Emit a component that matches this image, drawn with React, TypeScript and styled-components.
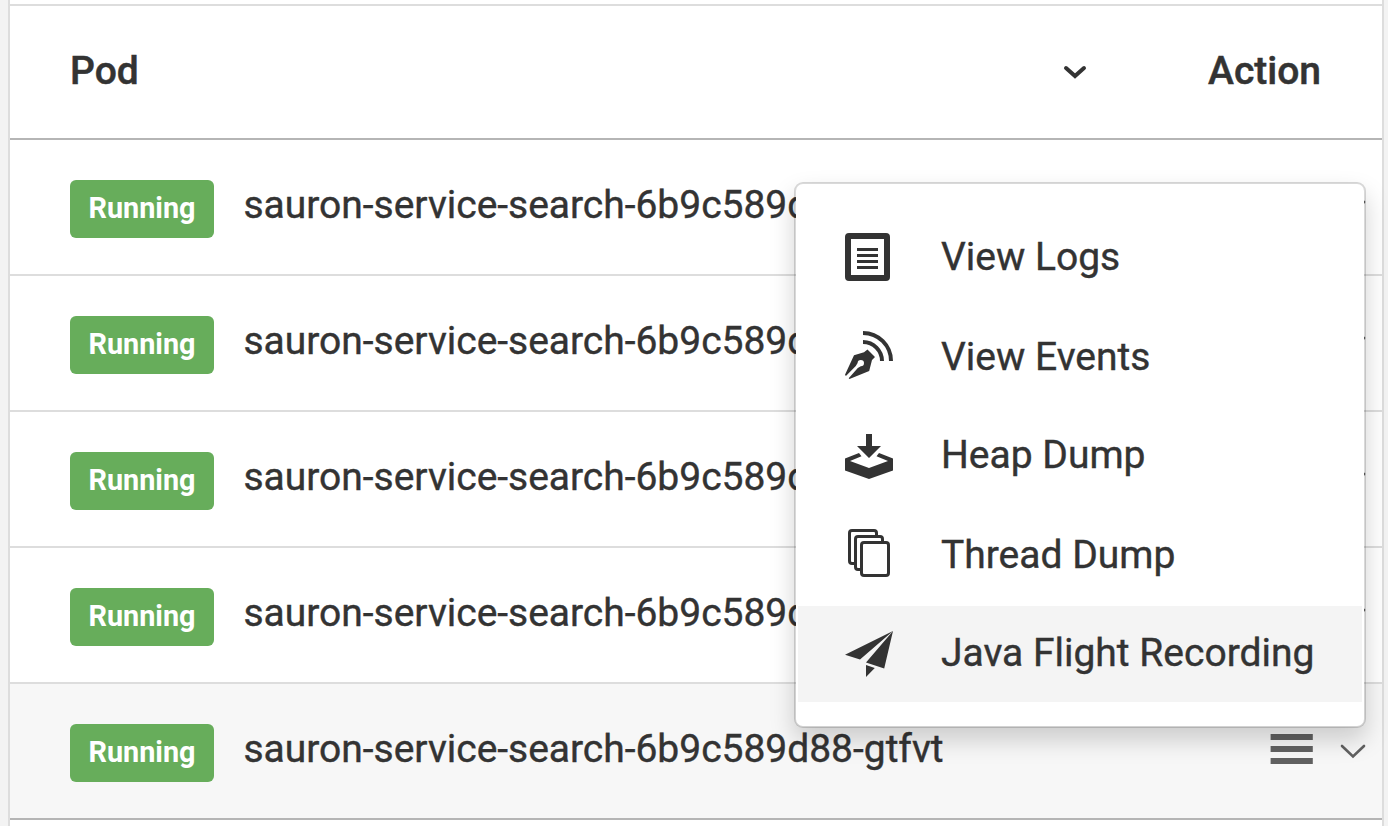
import React from "react";
import styled, { createGlobalStyle } from "styled-components";

const GlobalStyle = createGlobalStyle`
  *, *::before, *::after { box-sizing: border-box; }
  html, body { margin: 0; background: #f3f3f3; }
  body { overflow: hidden; font-family: Roboto, "Liberation Sans", sans-serif; color: #333; }
`;

const Page = styled.div`
  height: 826px;
  padding: 0 4px 0 8px;
  overflow: hidden;
`;

const Panel = styled.main`
  position: relative;
  width: 1376px;
  height: 826px;
  padding-top: 4px;
  border: solid #ddd;
  border-width: 0 2px;
  background: #fff;
`;

const HeaderRow = styled.div`
  display: flex;
  align-items: center;
  height: 136px;
  padding: 0 61px 2px 60px;
  border-top: 2px solid #ddd;
  border-bottom: 2px solid #b5b5b5;
`;

const HeaderLabel = styled.span`
  font-size: 39px;
  font-weight: 500;
  line-height: 46px;
  -webkit-text-stroke: 0.5px #333;
`;

const SortIcon = styled.svg`
  display: block;
  width: 24px;
  height: 16px;
  margin: 1px 121.5px 0 auto;
`;

const Row = styled.div<{ $active: boolean; $first: boolean }>`
  display: flex;
  align-items: center;
  height: ${(p) => (p.$first ? 134 : 136)}px;
  padding: 4px 16px 0 60px;
  border-top: ${(p) => (p.$first ? "0" : "2px solid #ddd")};
  background: ${(p) => (p.$active ? "#f7f7f7" : "#fff")};
`;

const BottomRule = styled.div`
  height: 2px;
  background: #b5b5b5;
`;

const Status = styled.span`
  width: 144px;
  height: 58px;
  border-radius: 6px;
  background: #67ad5b;
  color: #fff;
  font-size: 28.8px;
  font-weight: 700;
  line-height: 56px;
  text-align: center;
`;

const PodName = styled.span`
  flex: 1;
  margin: -8px 0 0 29.5px;
  font-size: 39px;
  line-height: 46px;
  letter-spacing: -0.02px;
  white-space: nowrap;
  -webkit-text-stroke: 0.4px #333;
`;

const RowActions = styled.div`
  display: flex;
  align-items: center;
  gap: 26px;
  margin-top: -8px;
  svg { display: block; }
`;

const ExpandIcon = styled.svg`
  width: 26px;
  height: 16px;
  margin-top: 3px;
`;

const Menu = styled.div`
  position: absolute;
  left: 784px;
  top: 182px;
  width: 572px;
  height: 546px;
  display: flex;
  flex-direction: column;
  gap: 3px;
  padding-top: 26px;
  border: 2px solid rgba(0, 0, 0, 0.15);
  border-radius: 9px;
  background: #fff;
  background-clip: padding-box;
  box-shadow: 0 12px 24px rgba(0, 0, 0, 0.175);
`;

const MenuLabel = styled.span`
  margin: -2px 0 0 48px;
  font-size: 39px;
  line-height: 46px;
  white-space: nowrap;
  -webkit-text-stroke: 0.4px #333;
`;

const MenuItem = styled.div<{ $active: boolean }>`
  display: flex;
  align-items: center;
  height: 96px;
  margin: 0 2px;
  padding-left: 47px;
  background: ${(p) => (p.$active ? "#f4f4f4" : "transparent")};

  &:nth-child(even) ${MenuLabel} {
    margin-top: 0;
  }
`;

const MenuIcon = styled.svg`
  display: block;
  width: 48px;
  height: 48px;
  overflow: visible;
  fill: #333;
  flex: none;
`;

const LogsIcon = () => (
  <MenuIcon viewBox="0 1 48 48">
    <path
      fillRule="evenodd"
      d="M4 0h37a4 4 0 0 1 4 4v40a4 4 0 0 1-4 4H4a4 4 0 0 1-4-4V4a4 4 0 0 1 4-4ZM6 6v36h33V6ZM12 15h21v3H12ZM12 21h21v3H12ZM12 27h21v3H12ZM12 33h21v3H12Z"
    />
  </MenuIcon>
);

const EventsIcon = () => (
  <MenuIcon viewBox="0 2 48 48">
    <path d="M18 2A28 28 0 0 1 46 30M18 11A19 19 0 0 1 37 30" fill="none" stroke="#333" strokeWidth="4" />
    <path d="M22.5 18.5 30 26l-3 3-2.8 11L4.5 48l-.8-.8L12.8 37l3-1.7a3.2 3.2 0 1 0-3.2-3.2l-1.8 3L.9 45l-.9-1.3L9 24.2l10-3Z" />
  </MenuIcon>
);

const HeapIcon = () => (
  <MenuIcon viewBox="0 0 48 48">
    <path d="M21 2h6v12h9L24 26 12 14h9Z" />
    <path d="M14 21 0 26.5v12L24 47l24-8.5v-12L34 21l-2.5 3.2L43 29l-19 7-19-7 11.5-4.8Z" />
  </MenuIcon>
);

const ThreadIcon = () => (
  <MenuIcon viewBox="0 2 48 48">
    <g fill="#fff" stroke="#333" strokeWidth="3">
      <rect x="4.5" y="1.5" width="27" height="33" rx="2.5" />
      <rect x="10.5" y="7.5" width="27" height="33" rx="2.5" />
      <rect x="16.5" y="13.5" width="27" height="33" rx="2.5" />
    </g>
  </MenuIcon>
);

const FlightIcon = () => (
  <MenuIcon viewBox="0 0 48 48">
    <path d="M48 1 0 24.7l15 4.8ZM48 1 21 32.5 39.2 38.5ZM21 35v12l8.8-9Z" />
  </MenuIcon>
);

const pods = Array.from({ length: 5 }, (_, i) => ({
  id: i,
  name: "sauron-service-search-6b9c589d88-gtfvt",
  active: i === 4,
}));

const menuItems = [
  { label: "View Logs", Icon: LogsIcon },
  { label: "View Events", Icon: EventsIcon },
  { label: "Heap Dump", Icon: HeapIcon },
  { label: "Thread Dump", Icon: ThreadIcon },
  { label: "Java Flight Recording", Icon: FlightIcon },
];

export default function App() {
  return (
    <>
      <GlobalStyle />
      <Page>
        <Panel>
          <HeaderRow>
            <HeaderLabel>Pod</HeaderLabel>
            <SortIcon viewBox="0 0 24 16">
              <path d="m3 4 9 8 9-8" fill="none" stroke="#333" strokeWidth="4" strokeLinecap="round" />
            </SortIcon>
            <HeaderLabel>Action</HeaderLabel>
          </HeaderRow>
          {pods.map((pod, i) => (
            <Row key={pod.id} $active={pod.active} $first={i === 0}>
              <Status>Running</Status>
              <PodName>{pod.name}</PodName>
              <RowActions>
                <svg width="44" height="30" viewBox="0 0 44 30" fill="#616161">
                  <path d="M.6 0h42.2v6H.6ZM.6 12h42.2v6H.6ZM.6 24h42.2v6H.6Z" />
                </svg>
                <ExpandIcon viewBox="0 0 26 16">
                  <path d="m2 3 11 10.5L24 3" fill="none" stroke="#616161" strokeWidth="2.6" strokeLinecap="round" />
                </ExpandIcon>
              </RowActions>
            </Row>
          ))}
          <BottomRule />
          <Menu>
            {menuItems.map(({ label, Icon }, i) => (
              <MenuItem key={label} $active={i === 4}>
                <Icon />
                <MenuLabel>{label}</MenuLabel>
              </MenuItem>
            ))}
          </Menu>
        </Panel>
      </Page>
    </>
  );
}
